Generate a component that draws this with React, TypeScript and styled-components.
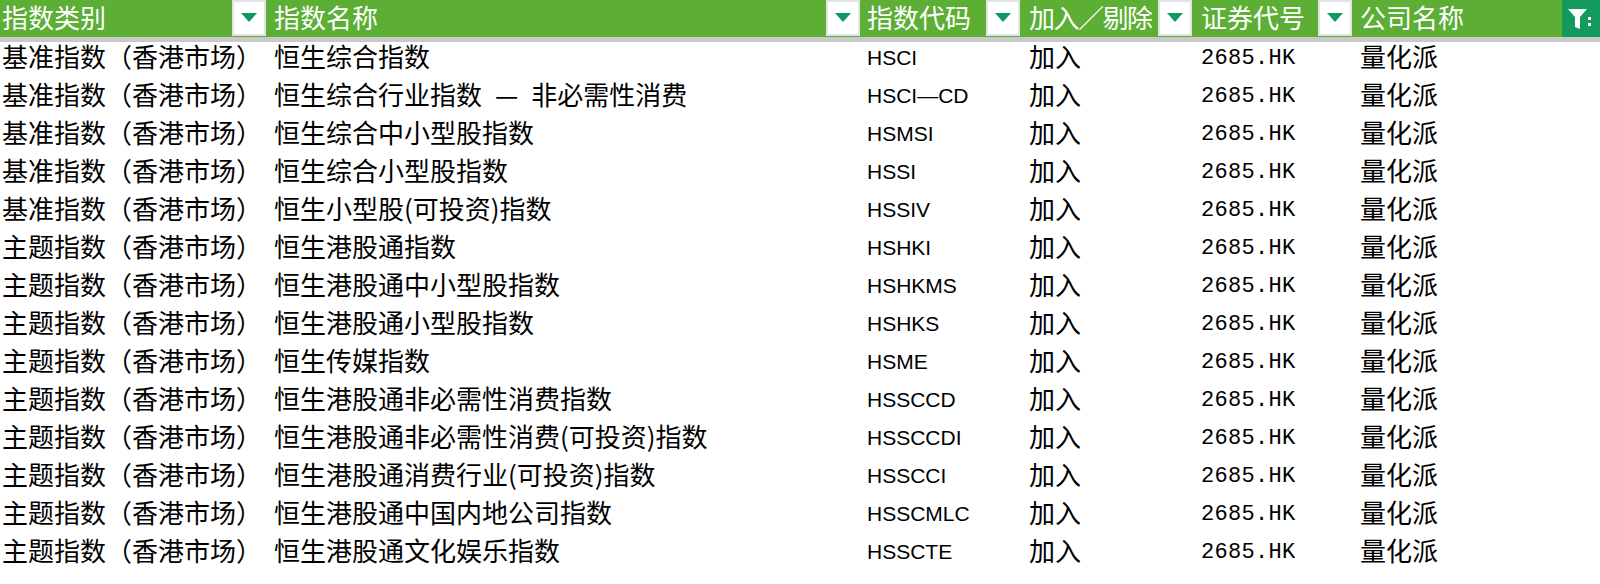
import React from 'react';
import styled, { createGlobalStyle } from 'styled-components';

const GlobalStyle = createGlobalStyle`
  html, body {
    margin: 0;
    padding: 0;
    background: #ffffff;
  }
  body {
    font-family: "Noto Sans CJK SC", "Noto Sans", sans-serif;
    color: #000;
  }
`;

const COLUMNS = '267px 594px 160px 172px 160px 1fr';

const Sheet = styled.div`
  width: 1600px;
  height: 584px;
  overflow: hidden;
  background: #fff;
`;

const HeaderRow = styled.div`
  display: grid;
  grid-template-columns: ${COLUMNS};
  grid-template-rows: 37px;
  height: 37px;
  background: #5dae35;
  border-bottom: 5px solid #c9c9c9;
`;

const HeaderCell = styled.div<{ $pad: number }>`
  display: flex;
  align-items: flex-start;
  justify-content: space-between;
  padding-left: ${(p) => p.$pad}px;
  color: #fff;
  white-space: nowrap;
`;

const HeaderLabel = styled.span<{ $tight?: boolean }>`
  align-self: center;
  font-size: 26px;
  line-height: 1;
  padding-bottom: 3px;
  letter-spacing: ${(p) => (p.$tight ? '-1.5px' : 'normal')};
`;

const DropButton = styled.div`
  box-sizing: border-box;
  flex: none;
  width: 34px;
  height: 36px;
  margin-right: 1px;
  background: #fff;
  border: 2px solid #e3e3e3;
  display: flex;
  align-items: center;
  justify-content: center;
`;

const FilterButton = styled.div`
  flex: none;
  width: 38px;
  height: 37px;
  background: #119a5c;
  display: flex;
  align-items: center;
  justify-content: center;
`;

const DataRow = styled.div`
  display: grid;
  grid-template-columns: ${COLUMNS};
  grid-template-rows: 38px;
  height: 38px;
`;

const Cell = styled.div<{ $pad: number; $font?: 'latin' | 'mono' }>`
  display: flex;
  align-items: center;
  padding-left: ${(p) => p.$pad}px;
  padding-bottom: ${(p) => (p.$font === 'latin' ? '7px' : p.$font ? '5px' : '10px')};
  line-height: 1;
  font-size: ${(p) => (p.$font === 'mono' ? '22px' : p.$font ? '21px' : '26px')};
  letter-spacing: ${(p) => (p.$font === 'mono' ? '0.3px' : 'normal')};
  font-family: ${(p) =>
    p.$font === 'mono'
      ? '"Liberation Mono", monospace'
      : p.$font === 'latin'
      ? '"Liberation Sans", Arial, sans-serif'
      : '"Noto Sans CJK SC", "Noto Sans", sans-serif'};
  white-space: nowrap;
`;

const Triangle = () => (
  <svg width="16" height="10" viewBox="0 0 16 10">
    <path d="M0 0 H16 L8 9 Z" fill="#109a5e" />
  </svg>
);

const FunnelIcon = () => (
  <svg width="28" height="26" viewBox="0 0 28 26">
    <path d="M1 3 H20 L13 11 V23 L8 21 V11 Z" fill="#fff" />
    <rect x="21" y="11" width="3" height="3" fill="#fff" />
    <rect x="21" y="17" width="3" height="3" fill="#fff" />
  </svg>
);

const headers = ['指数类别', '指数名称', '指数代码', '加入／剔除', '证券代号', '公司名称'];
const pads = [2, 7, 6, 8, 8, 7];

const rows: [string, string, string][] = [
  ['基准指数（香港市场）', '恒生综合指数', 'HSCI'],
  ['基准指数（香港市场）', '恒生综合行业指数\u2002—\u2002非必需性消费', 'HSCI—CD'],
  ['基准指数（香港市场）', '恒生综合中小型股指数', 'HSMSI'],
  ['基准指数（香港市场）', '恒生综合小型股指数', 'HSSI'],
  ['基准指数（香港市场）', '恒生小型股(可投资)指数', 'HSSIV'],
  ['主题指数（香港市场）', '恒生港股通指数', 'HSHKI'],
  ['主题指数（香港市场）', '恒生港股通中小型股指数', 'HSHKMS'],
  ['主题指数（香港市场）', '恒生港股通小型股指数', 'HSHKS'],
  ['主题指数（香港市场）', '恒生传媒指数', 'HSME'],
  ['主题指数（香港市场）', '恒生港股通非必需性消费指数', 'HSSCCD'],
  ['主题指数（香港市场）', '恒生港股通非必需性消费(可投资)指数', 'HSSCCDI'],
  ['主题指数（香港市场）', '恒生港股通消费行业(可投资)指数', 'HSSCCI'],
  ['主题指数（香港市场）', '恒生港股通中国内地公司指数', 'HSSCMLC'],
  ['主题指数（香港市场）', '恒生港股通文化娱乐指数', 'HSSCTE'],
];

export default function App() {
  return (
    <Sheet>
      <GlobalStyle />
      <HeaderRow>
        {headers.map((h, i) => (
          <HeaderCell key={h} $pad={pads[i]}>
            <HeaderLabel $tight={h.length > 4}>{h}</HeaderLabel>
            {i < headers.length - 1 ? (
              <DropButton>
                <Triangle />
              </DropButton>
            ) : (
              <FilterButton>
                <FunnelIcon />
              </FilterButton>
            )}
          </HeaderCell>
        ))}
      </HeaderRow>
      {rows.map(([kind, name, code]) => (
        <DataRow key={code}>
          <Cell $pad={pads[0]}>{kind}</Cell>
          <Cell $pad={pads[1]}>{name}</Cell>
          <Cell $pad={pads[2]} $font="latin">{code}</Cell>
          <Cell $pad={pads[3]}>加入</Cell>
          <Cell $pad={pads[4]} $font="mono">2685.HK</Cell>
          <Cell $pad={pads[5]}>量化派</Cell>
        </DataRow>
      ))}
    </Sheet>
  );
}
